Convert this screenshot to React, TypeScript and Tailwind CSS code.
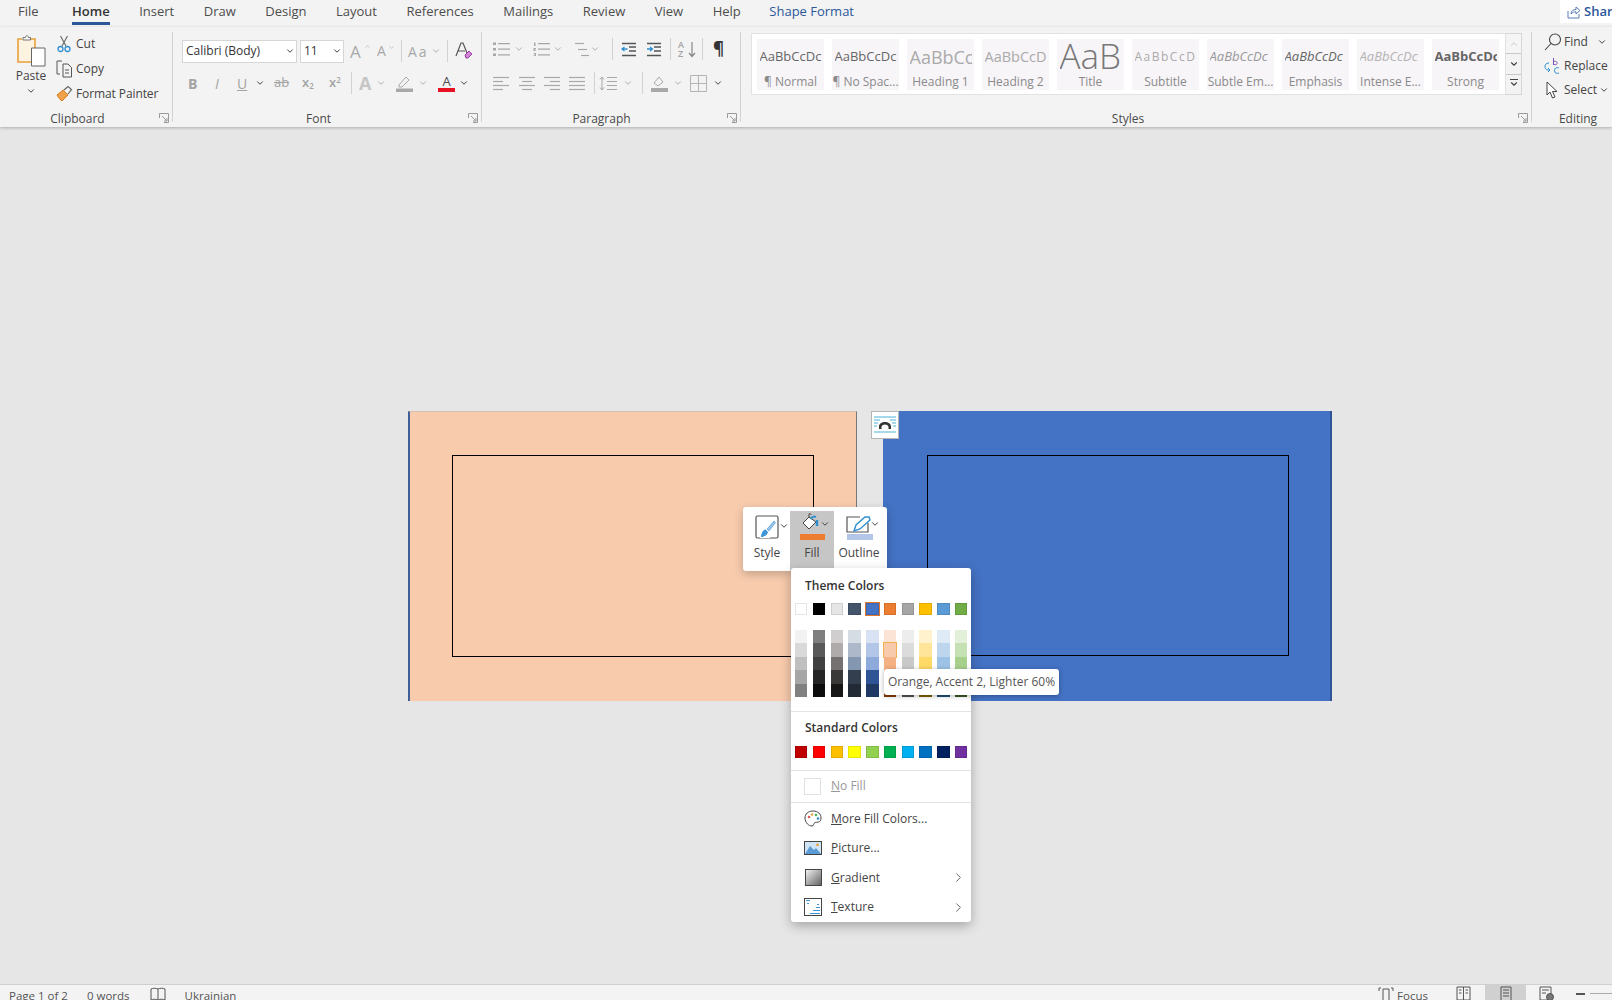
import React from 'react';
import { ChevronDown, ChevronRight, ChevronUp } from 'lucide-react';

const tabs = ['Home', 'Insert', 'Draw', 'Design', 'Layout', 'References', 'Mailings', 'Review', 'View', 'Help'];

const themeTop = ['#ffffff', '#000000', '#e7e6e6', '#44546a', '#4472c4', '#ed7d31', '#a5a5a5', '#ffc000', '#5b9bd5', '#70ad47'];
const themeShades = [
  ['#f2f2f2', '#d9d9d9', '#bfbfbf', '#a6a6a6', '#808080'],
  ['#7f7f7f', '#595959', '#404040', '#262626', '#0d0d0d'],
  ['#d0cece', '#afabab', '#767171', '#3b3838', '#181717'],
  ['#d6dce4', '#adb9ca', '#8497b0', '#333f4f', '#222b35'],
  ['#d9e2f3', '#b4c6e7', '#8eaadb', '#2f5496', '#1f3864'],
  ['#fbe4d5', '#f7caac', '#f4b183', '#c55a11', '#833c0b'],
  ['#ededed', '#dbdbdb', '#c9c9c9', '#7b7b7b', '#525252'],
  ['#fff2cc', '#ffe599', '#ffd966', '#bf9000', '#7f6000'],
  ['#deeaf6', '#bdd6ee', '#9cc2e5', '#2e74b5', '#1f4e79'],
  ['#e2efd9', '#c5e0b3', '#a8d08d', '#538135', '#385623'],
];
const standard = ['#c00000', '#ff0000', '#ffc000', '#ffff00', '#92d050', '#00b050', '#00b0f0', '#0070c0', '#002060', '#7030a0'];

const Chev: React.FC<{ dark?: boolean; className?: string }> = ({ dark, className = '' }) => (
  <ChevronDown size={10} strokeWidth={2.4} className={`${dark ? 'text-[#444]' : 'text-[#b0b0b0]'} shrink-0 ${className}`} />
);

const Launcher = () => (
  <svg width="10" height="10" viewBox="0 0 10 10" className="absolute right-[3px] -bottom-[1px] text-[#9a9a9a]" fill="none" stroke="currentColor">
    <path d="M0.5 5V0.5H9.5V9.5H5M3 3L8 8M8 5V8H5" />
  </svg>
);

const Lines: React.FC<{ rows: [number, number][]; color?: string }> = ({ rows, color = '#a8a8a8' }) => (
  <svg width="17" height="15" viewBox="0 0 17 15" fill="none" stroke={color} strokeWidth="1.2">
    {rows.map(([a, b], i) => (
      <path key={i} d={`M${a} ${1.5 + i * (12 / (rows.length - 1))}H${b}`} />
    ))}
  </svg>
);

const Indent: React.FC<{ flip?: boolean }> = ({ flip }) => (
  <svg width="16" height="15" viewBox="0 0 16 15" fill="none">
    <path d="M1 1.5H15M8 5H15M8 9H15M1 13.5H15" stroke="#555" strokeWidth="1.3" />
    <path d={flip ? 'M1 7H6M4 5L6.5 7L4 9' : 'M6.5 7H1.5M3.5 5L1 7L3.5 9'} stroke="#2f8fd0" strokeWidth="1.3" />
  </svg>
);

const Group: React.FC<{ label: string; className: string; labelClass: string; children: React.ReactNode }> = ({ label, className, labelClass, children }) => (
  <div className={`relative shrink-0 flex flex-col border-r border-[#d2d2d2] my-[5px] ${className}`}>
    <div className="flex-1 min-h-0 -mt-[5px]">{children}</div>
    <div className={`h-[16px] leading-[16px] text-[12px] text-[#4a4a4a] text-center -mb-[5px] ${labelClass}`}>{label}</div>
    <Launcher />
  </div>
);

const StyleItem: React.FC<{ sample: string; label: string; className: string }> = ({ sample, label, className }) => (
  <div className="w-[67px] h-[51px] shrink-0 bg-[#f7f5f8] flex flex-col items-center overflow-hidden pt-[2px]">
    <div className={`h-[33px] w-[62px] shrink-0 overflow-hidden whitespace-nowrap flex items-center ${className}`}>{sample}</div>
    <div className="text-[12px] leading-[16px] text-[#8a8a8a] whitespace-nowrap">{label}</div>
  </div>
);

const MenuRow: React.FC<{ icon: React.ReactNode; children: React.ReactNode; arrow?: boolean }> = ({ icon, children, arrow }) => (
  <div className="h-[29.5px] flex items-center pl-[13px] pr-[5px] text-[12px] text-[#444]">
    <span className="w-[18px] h-[18px] shrink-0 flex items-center justify-center">{icon}</span>
    <span className="ml-[9px] flex-1">{children}</span>
    {arrow && <ChevronRight size={15} strokeWidth={1.4} className="text-[#555]" />}
  </div>
);

const Swatch: React.FC<{ color: string }> = ({ color }) => (
  <span className="w-[12.4px] h-[12px] shrink-0 border border-black/10" style={{ backgroundColor: color }} />
);

export default function App() {
  return (
    <div className="w-[1612px] h-[1000px] overflow-hidden flex flex-col bg-[#e6e6e6] text-[#444] font-['Open_Sans',sans-serif]">
      {/* Tab strip */}
      <div className="h-[27px] shrink-0 bg-[#f3f3f3] flex items-start pl-[18px] gap-[29.5px] relative text-[13px] leading-[23px]">
        <div className="text-[#4d4d4d] mr-[4px]">File</div>
        {tabs.map(t => (
          <div key={t} className={t === 'Home' ? 'relative text-[#333] font-semibold' : 'text-[#4d4d4d]'}>
            {t}
            {t === 'Home' && <span className="absolute left-0 right-0 top-[22px] h-[2.5px] bg-[#2b579a]" />}
          </div>
        ))}
        <div className="text-[#2b579a] -ml-[1px]">Shape Format</div>
        <div className="absolute right-0 top-0 w-[52px] h-[23px] bg-white flex items-center pl-[7px] gap-[3px] overflow-hidden text-[#2b579a] font-semibold whitespace-nowrap">
          <svg width="14" height="14" viewBox="0 0 14 14" fill="none" stroke="#5a7fb5" className="shrink-0">
            <path d="M1 6V13H12V9M4 9C4 6 6 4.5 9 4.5V2L13 5.5L9 9V6.8C7 6.8 5.5 7.5 4 9Z" />
          </svg>
          Share
        </div>
      </div>

      {/* Ribbon */}
      <div className="h-[100px] shrink-0 bg-[#f3f3f3] flex shadow-[0_1px_3px_rgba(0,0,0,0.25)] relative z-10 text-[12px]">
        {/* Clipboard */}
        <Group label="Clipboard" className="w-[173px]" labelClass="pr-[17px]">
          <div className="flex h-full">
            <div className="w-[56px] shrink-0 flex flex-col items-center pt-[7px] pl-[6px]">
              <svg width="29" height="33" viewBox="0 0 29 33" fill="none">
                <path d="M1 5H18V14H14V28H1Z" fill="#fdf3e1" />
                <path d="M5 5H1V28H14M14 5H18V14" stroke="#e9a13b" strokeWidth="1.6" />
                <path d="M6 6V3.5H8.5C8.8 1 11 1 11.5 3.5H13.5V6Z" stroke="#777" fill="#f8f8f8" />
                <path d="M14.5 14H28V32H14.5Z" stroke="#666" fill="#ffffff" />
              </svg>
              <div className="leading-[16px] mt-[1px]">Paste</div>
              <Chev dark className="mt-[2px]" />
            </div>
            <div className="flex flex-col pt-[4px]">
              <div className="h-[25px] flex items-center">
                <svg width="16" height="18" viewBox="0 0 16 18" fill="none" className="mr-[4px]">
                  <path d="M4.5 1L10 11M11.5 1L6 11" stroke="#666" strokeWidth="1.1" />
                  <circle cx="4.5" cy="14" r="2.5" stroke="#2f8fd0" strokeWidth="1.3" />
                  <circle cx="11.5" cy="14" r="2.5" stroke="#2f8fd0" strokeWidth="1.3" />
                </svg>
                Cut
              </div>
              <div className="h-[25px] flex items-center">
                <svg width="16" height="18" viewBox="0 0 16 18" fill="none" stroke="#555" className="mr-[4px]">
                  <path d="M6 1H1V14H4M7 4H12L15.5 7.5V17H7Z" />
                  <path d="M9 10H13M9 13H13" />
                </svg>
                Copy
              </div>
              <div className="h-[25px] flex items-center whitespace-nowrap">
                <svg width="17" height="17" viewBox="0 0 17 17" fill="none" className="mr-[3px]">
                  <path d="M1 10L7 5L12 10L6 16Q3 14 1 10Z" fill="#f0a24a" stroke="#d57f20" />
                  <path d="M8 5L12 1.5L15.5 4.5L12 9" stroke="#666" strokeWidth="1.2" />
                </svg>
                <span className="tracking-[-0.1px]">Format Painter</span>
              </div>
            </div>
          </div>
        </Group>

        {/* Font */}
        <Group label="Font" className="w-[309px] pl-[9px]" labelClass="pr-[26px]">
          <div className="flex items-center pt-[12px] h-[36px]">
            <div className="w-[115px] h-[23px] bg-white border border-[#d6d6d6] flex items-center justify-between pl-[3px] pr-[1px] text-[#333]">
              Calibri (Body) <Chev dark />
            </div>
            <div className="w-[44px] h-[23px] ml-[3px] bg-white border border-[#d6d6d6] flex items-center justify-between pl-[3px] pr-[1px] text-[#333]">
              11 <Chev dark />
            </div>
            <span className="ml-[6px] w-[18px] text-[17px] leading-none text-[#a8a8a8] relative">A<ChevronUp size={7} className="absolute right-[-3px] top-0" /></span>
            <span className="ml-[9px] w-[14px] text-[14px] leading-none text-[#a8a8a8] relative">A<ChevronDown size={7} className="absolute right-[-4px] top-0" /></span>
            <span className="ml-[10px] h-[22px] border-l border-[#d2d2d2]" />
            <span className="ml-[6px] text-[14px] text-[#a8a8a8] tracking-[2px]">Aa</span>
            <Chev className="ml-[2px]" />
            <span className="ml-[6px] h-[22px] border-l border-[#d2d2d2]" />
            <svg width="18" height="18" viewBox="0 0 18 18" fill="none" className="ml-[7px]">
              <path d="M1 14L6 1H8L12 11M3 9H10" stroke="#555" strokeWidth="1.2" />
              <path d="M10 13L14 9L17 12L13 16H11Z" fill="#d184d6" stroke="#9b3fa5" />
            </svg>
          </div>
          <div className="flex items-center h-[30px] mt-[5px] text-[#a4a4a4] text-[14px]">
            <span className="ml-[6px] w-[10px] font-bold">B</span>
            <span className="ml-[17px] w-[10px] italic">I</span>
            <span className="ml-[12px] w-[11px] underline">U</span>
            <Chev dark className="ml-[7px]" />
            <span className="ml-[9px] w-[17px] line-through text-[13px]">ab</span>
            <span className="ml-[11px] w-[13px] text-[13px] font-semibold">x<sub className="text-[8px]">2</sub></span>
            <span className="ml-[14px] w-[13px] text-[13px] font-semibold">x<sup className="text-[8px]">2</sup></span>
            <span className="ml-[9px] h-[22px] border-l border-[#d2d2d2]" />
            <span className="ml-[7px] w-[15px] text-[18px] leading-none font-bold text-[#c6c6c6]">A</span>
            <Chev className="ml-[2px]" />
            <svg width="17" height="17" viewBox="0 0 17 17" fill="none" className="ml-[10px]">
              <path d="M3 10L10 2L13 5L6 12H3Z" stroke="#a8a8a8" />
              <path d="M0 13.5H17V17H0Z" fill="#a8a8a8" />
            </svg>
            <Chev className="ml-[5px]" />
            <div className="ml-[10px] w-[17px] flex flex-col items-center text-[#4d4d4d] text-[13px] leading-[14px]">
              A
              <span className="w-[17px] h-[4px] bg-[#e81123]" />
            </div>
            <Chev dark className="ml-[4px]" />
          </div>
        </Group>

        {/* Paragraph */}
        <Group label="Paragraph" className="w-[259px] pl-[11px]" labelClass="pr-[30px]">
          <div className="flex items-center pt-[10px] h-[34px]">
            <svg width="17" height="15" viewBox="0 0 17 15" fill="#a8a8a8">
              <path d="M0 0.5H3V3H0ZM0 6H3V8.5H0ZM0 11.5H3V14H0ZM5 1H17V2.2H5ZM5 6.6H17V7.8H5ZM5 12.2H17V13.4H5Z" />
            </svg>
            <Chev className="ml-[4px]" />
            <svg width="17" height="15" viewBox="0 0 17 15" fill="#a8a8a8" className="ml-[9px]">
              <path d="M1 0.5H2.5V4H1ZM0.5 6H3V6.8L1.5 8.2H3V9H0.5ZM0.5 11H3V14H0.5V13.2H2V12.8H1V12.2H2V11.8H0.5ZM5 1H17V2.2H5ZM5 6.6H17V7.8H5ZM5 12.2H17V13.4H5Z" />
            </svg>
            <Chev className="ml-[3px]" />
            <span className="ml-[9px]"><Lines rows={[[3, 12], [6, 15], [9, 17]]} /></span>
            <Chev className="ml-[1px]" />
            <span className="ml-[12px] h-[22px] border-l border-[#d2d2d2]" />
            <span className="ml-[8px]"><Indent /></span>
            <span className="ml-[9px]"><Indent flip /></span>
            <span className="ml-[8px] h-[22px] border-l border-[#d2d2d2]" />
            <span className="ml-[7px] w-[8px] text-[9px] leading-[9px] font-semibold text-[#a4a4a4]">A<br />Z</span>
            <svg width="10" height="17" viewBox="0 0 10 17" fill="none" className="ml-[1px]">
              <path d="M5 1V15M2 12L5 15.5L8 12" stroke="#888" strokeWidth="1.2" />
            </svg>
            <span className="ml-[5px] h-[22px] border-l border-[#d2d2d2]" />
            <span className="ml-[10px] text-[17px] font-bold text-[#333]">¶</span>
          </div>
          <div className="flex items-center h-[30px] mt-[7px]">
            <Lines rows={[[0, 16], [0, 10], [0, 16], [0, 10]]} />
            <span className="ml-[9px]"><Lines rows={[[0, 16], [3, 13], [0, 16], [3, 13]]} /></span>
            <span className="ml-[8px]"><Lines rows={[[0, 16], [6, 16], [0, 16], [6, 16]]} /></span>
            <span className="ml-[8px]"><Lines rows={[[0, 16], [0, 16], [0, 16], [0, 16]]} /></span>
            <span className="ml-[8px] h-[22px] border-l border-[#d2d2d2]" />
            <svg width="18" height="15" viewBox="0 0 18 15" fill="none" stroke="#a8a8a8" className="ml-[4px]">
              <path d="M3 1V14M1 3.5L3 1L5 3.5M1 11.5L3 14L5 11.5M8 1.5H18M8 5.5H18M8 9.5H18M8 13.5H18" />
            </svg>
            <Chev className="ml-[6px]" />
            <span className="ml-[9px] h-[22px] border-l border-[#d2d2d2]" />
            <svg width="17" height="17" viewBox="0 0 17 17" fill="none" className="ml-[8px]">
              <path d="M3 8L8 2L12 7L7 11Z" stroke="#a8a8a8" />
              <path d="M0 13H17V17H0Z" fill="#a8a8a8" />
            </svg>
            <Chev className="ml-[5px]" />
            <svg width="17" height="17" viewBox="0 0 17 17" fill="none" stroke="#b4b4b4" className="ml-[7px]">
              <path d="M0.5 0.5H16.5V16.5H0.5ZM8.5 0.5V16.5M0.5 8.5H16.5" />
            </svg>
            <Chev dark className="ml-[6px]" />
          </div>
        </Group>

        {/* Styles */}
        <Group label="Styles" className="w-[791px] pl-[10px]" labelClass="pr-[26px]">
          <div className="flex pt-[6px]">
            <div className="w-[755px] h-[62px] bg-white border border-[#e2e2e2] flex items-center pl-[5px] gap-[8px] overflow-hidden">
              <StyleItem sample="AaBbCcDc" label="¶ Normal" className="text-[13px] text-[#666]" />
              <StyleItem sample="AaBbCcDc" label="¶ No Spac..." className="text-[13px] text-[#666]" />
              <StyleItem sample="AaBbCc" label="Heading 1" className="text-[18px] text-[#aaa]" />
              <StyleItem sample="AaBbCcD" label="Heading 2" className="text-[14.5px] text-[#aaa]" />
              <StyleItem sample="AaB" label="Title" className="text-[35px] leading-[33px] font-light text-[#777] pb-[4px]" />
              <StyleItem sample="AaBbCcD" label="Subtitle" className="text-[12px] tracking-[1.5px] text-[#aaa]" />
              <StyleItem sample="AaBbCcDc" label="Subtle Em..." className="text-[13px] italic text-[#999]" />
              <StyleItem sample="AaBbCcDc" label="Emphasis" className="text-[13px] italic text-[#666]" />
              <StyleItem sample="AaBbCcDc" label="Intense E..." className="text-[13px] italic text-[#b4b4b4]" />
              <StyleItem sample="AaBbCcDc" label="Strong" className="text-[13px] font-bold text-[#666]" />
            </div>
            <div className="w-[16px] h-[62px] flex flex-col border border-l-0 border-[#d6d6d6] divide-y divide-[#c8c8c8]">
              <div className="flex-1 flex items-center justify-center bg-[#f5f5f5]"><ChevronUp size={10} className="text-[#c0c0c0]" /></div>
              <div className="flex-1 flex items-center justify-center"><ChevronDown size={10} strokeWidth={2.6} className="text-[#444]" /></div>
              <div className="flex-1 flex flex-col items-center justify-center">
                <span className="w-[8px] border-t border-[#444]" />
                <ChevronDown size={10} strokeWidth={2.6} className="text-[#444] -mt-[1px]" />
              </div>
            </div>
          </div>
        </Group>

        {/* Editing */}
        <div className="flex-1 relative flex flex-col my-[5px]">
          <div className="flex-1 -mt-[5px] pt-[3px] pl-[12px]">
            <div className="h-[24px] flex items-center">
              <svg width="18" height="18" viewBox="0 0 18 18" fill="none" stroke="#444" strokeWidth="1.1" className="mr-[2px]">
                <circle cx="11" cy="6.5" r="5.5" /><path d="M7 10.5L1 17" />
              </svg>
              Find <Chev dark className="ml-[9px]" />
            </div>
            <div className="h-[24px] flex items-center">
              <svg width="18" height="18" viewBox="0 0 18 18" fill="none" className="mr-[2px]">
                <path d="M9.5 1V8M9.5 5C11 3.5 13.5 4.5 13 6.5C12.5 8.5 10 8 9.5 6.5" stroke="#7d4fb0" />
                <path d="M5 6C2 6 0.5 8 1 10.5C1.5 12.5 3.5 13.5 6 13M4 11L6 13L4 15" stroke="#2f8fd0" />
                <path d="M15 11C12.5 10 10.5 11 10.5 13.5C10.5 16 12.5 17 15 16" stroke="#2f8fd0" />
              </svg>
              Replace
            </div>
            <div className="h-[24px] flex items-center">
              <svg width="18" height="18" viewBox="0 0 18 18" fill="#fff" stroke="#444" className="mr-[2px]">
                <path d="M3 1V14L6 11L8.5 17L11 16L8.5 10.5H13Z" />
              </svg>
              Select <Chev dark className="ml-[2px]" />
            </div>
          </div>
          <div className="h-[16px] leading-[16px] text-[12px] text-[#4a4a4a] text-center -mb-[5px] pl-[12px]">Editing</div>
        </div>
      </div>

      {/* Document canvas */}
      <div className="flex-1 relative overflow-hidden">
        <div className="absolute left-[408px] top-[284px] w-[449px] h-[290px] bg-[#f8cbad] border-l-2 border-l-[#3f5f96] border-r border-r-[#777] border-t border-t-[#d8c0b0]">
          <div className="absolute left-[42px] top-[43px] w-[362px] h-[202px] border border-black" />
        </div>
        <div className="absolute left-[883px] top-[284px] w-[449px] h-[290px] bg-[#4472c4] border-r-2 border-r-[#2f5496]">
          <div className="absolute left-[44px] top-[44px] w-[362px] h-[201px] border border-black" />
        </div>

        {/* Layout options */}
        <div className="absolute left-[871px] top-[284px] w-[28px] h-[28px] bg-white border border-[#b5b5b5] flex items-center justify-center">
          <svg width="22" height="20" viewBox="0 0 22 20" fill="none">
            <path d="M0 2H22M0 5H6M16 5H22M0 8H4M18 8H22M0 11H3M19 11H22M0 17H22" stroke="#4db2d8" />
            <path d="M5 14V11.5C5 5.5 17 5.5 17 11.5V14H14.5V12C14.5 8.5 7.5 8.5 7.5 12V14Z" fill="#333" />
          </svg>
        </div>

        {/* Mini toolbar */}
        <div className="absolute left-[743px] top-[380px] w-[144px] h-[64px] bg-white rounded-[3px] shadow-[0_3px_10px_rgba(0,0,0,0.22)] flex text-[12px] text-[#444]">
          <div className="w-[47px] flex flex-col items-center pt-[8px] pl-[3px]">
            <div className="flex items-center h-[24px] pl-[8px]">
              <svg width="24" height="24" viewBox="0 0 24 24" fill="none">
                <rect x="1" y="1" width="22" height="22" rx="1.5" stroke="#555" strokeWidth="1.2" />
                <path d="M5 23H15V19L22 12V5H18L11 13C8 14 6 18 5 23Z" fill="#fff" />
                <path d="M6 22C6 18 8 15 10.5 14.5L13 17C12.5 20 9 22 6 22Z" fill="#3b95d6" />
                <path d="M12 14L19 6L20.5 7.5L14 16Z" fill="#9cc2e5" stroke="#3b95d6" strokeWidth="0.6" />
              </svg>
              <Chev dark className="-mt-[2px]" />
            </div>
            <div className="leading-[16px] mt-[6px] -ml-[2px]">Style</div>
          </div>
          <div className="w-[44px] h-[60px] mt-[4px] bg-[#c6c6c6] flex flex-col items-center pt-[2px]">
            <div className="flex items-start h-[21px] pl-[7px]">
              <svg width="20" height="20" viewBox="0 0 20 20" fill="none">
                <path d="M8 4L2 10L8 16L15 9Z" fill="#fff" stroke="#444" />
                <path d="M8 4V1M8 1C9 0 10 1 10 2" stroke="#444" />
                <path d="M15 4C13 3 11 4 9.5 6" stroke="#2f8fd0" strokeWidth="2" />
                <path d="M16 7V13" stroke="#2f8fd0" strokeWidth="2.4" />
              </svg>
              <Chev dark className="mt-[6px] ml-[-1px]" />
            </div>
            <span className="w-[25px] h-[6px] bg-[#ed7d31]" />
            <div className="leading-[16px] mt-[5px]">Fill</div>
          </div>
          <div className="w-[53px] flex flex-col items-center pt-[8px]">
            <div className="flex items-center h-[18px] pl-[4px]">
              <svg width="26" height="17" viewBox="0 0 26 17" fill="none">
                <path d="M14 1H1V16H22V7" stroke="#555" strokeWidth="1.2" />
                <path d="M8 15L10 9L19 1H23L24 4L14 13Z" fill="#fff" stroke="#2f8fd0" strokeWidth="1.4" />
              </svg>
              <Chev dark className="ml-[-2px]" />
            </div>
            <span className="w-[26px] h-[6px] bg-[#b4c6e7] -ml-[2px] mt-[1px]" />
            <div className="leading-[16px] mt-[5px] -ml-[3px]">Outline</div>
          </div>
        </div>

        {/* Fill dropdown */}
        <div className="absolute left-[791px] top-[441px] w-[180px] h-[354px] bg-white rounded-[3px] shadow-[0_4px_12px_rgba(0,0,0,0.28)] pt-[10px] text-[12px] z-10">
          <div className="pl-[14px] leading-[16px] font-semibold text-[#333]">Theme Colors</div>
          <div className="flex pl-[4px] gap-[5.4px] mt-[9px]">
            {themeTop.map(c => (
              <span key={c} className="relative w-[12.4px] h-[12px] shrink-0 border border-black/10" style={{ backgroundColor: c }}>
                {c === '#4472c4' && <span className="absolute -inset-[2px] border border-[#e5762c]" />}
              </span>
            ))}
          </div>
          <div className="flex pl-[4px] gap-[5.4px] mt-[15px]">
            {themeShades.map((col, i) => (
              <div key={i} className="w-[12.4px] flex flex-col shrink-0">
                {col.map((c, j) => (
                  <span key={c} className="relative h-[13.4px]" style={{ backgroundColor: c }}>
                    {i === 5 && j === 1 && <span className="absolute -inset-[1px] border border-[#f0b050]" />}
                  </span>
                ))}
              </div>
            ))}
          </div>
          <div className="mt-[14px] border-t border-[#e3e3e3]" />
          <div className="mt-[8px] pl-[14px] leading-[16px] font-semibold text-[#333]">Standard Colors</div>
          <div className="flex pl-[4px] gap-[5.4px] mt-[10px]">
            {standard.map(c => <Swatch key={c} color={c} />)}
          </div>
          <div className="mt-[12px] border-t border-[#e3e3e3]" />
          <div className="h-[31px] flex items-center pl-[13px] text-[#999]">
            <span className="w-[17px] h-[17px] border border-[#e0e0e0]" />
            <span className="ml-[10px]"><span className="underline">N</span>o Fill</span>
          </div>
          <div className="border-t border-[#e3e3e3]" />
          <div className="mt-[1px]">
            <MenuRow icon={
              <svg width="18" height="17" viewBox="0 0 18 17" fill="none">
                <path d="M9 1C4 1 1 4 1 8C1 13 5 16 8 16C10 16 9.5 13 11 12.5C13 12 17 13 17 8C17 4 14 1 9 1Z" stroke="#444" />
                <circle cx="5" cy="7" r="1.3" fill="#e05a4e" /><circle cx="8" cy="4.5" r="1.3" fill="#e9a13b" />
                <circle cx="12" cy="5" r="1.3" fill="#4caf50" /><circle cx="14" cy="8.5" r="1.3" fill="#2f8fd0" />
              </svg>
            }><span className="underline">M</span>ore Fill Colors...</MenuRow>
            <MenuRow icon={
              <svg width="18" height="14" viewBox="0 0 18 14">
                <rect x="0.5" y="0.5" width="17" height="13" fill="#cfe4f5" stroke="#444" />
                <path d="M1 13L6 5L10 9L12 7L17 13Z" fill="#5b9bd5" />
                <circle cx="13.5" cy="3.8" r="1.4" fill="#e9a13b" />
              </svg>
            }><span className="underline">P</span>icture...</MenuRow>
            <MenuRow arrow icon={<span className="w-[17px] h-[17px] border border-[#444] bg-gradient-to-br from-[#f2f2f2] to-[#666]" />}>
              <span className="underline">G</span>radient
            </MenuRow>
            <MenuRow arrow icon={
              <svg width="18" height="18" viewBox="0 0 18 18">
                <rect x="0.5" y="0.5" width="17" height="17" fill="#fff" stroke="#444" />
                <path d="M2 2H6V3H2ZM3 5H5V6H3ZM12 9H16V10H12ZM9 12H16V13H9ZM6 15H16V16H6ZM13 6H15V7H13Z" fill="#3b95d6" />
              </svg>
            }><span className="underline">T</span>exture</MenuRow>
          </div>
        </div>

        {/* Tooltip */}
        <div className="absolute left-[884px] top-[542px] w-[175px] h-[26px] bg-white rounded-[3px] shadow-[0_1px_5px_rgba(0,0,0,0.3)] flex items-center justify-center whitespace-nowrap text-[12px] text-[#555] z-20">
          Orange, Accent 2, Lighter 60%
        </div>
      </div>

      {/* Status bar */}
      <div className="h-[16px] shrink-0 bg-[#f3f3f3] border-t border-[#cfcfcf] flex items-start text-[11.5px] text-[#555] leading-[16px] overflow-hidden pl-[9px] relative">
        <span className="mt-[3px]">Page 1 of 2</span>
        <span className="mt-[3px] ml-[19px]">0 words</span>
        <svg width="16" height="15" viewBox="0 0 16 15" fill="none" stroke="#555" className="ml-[20px] mt-[2px]">
          <path d="M8 2C6 1 3 1 1 2V13C3 12 6 12 8 13C10 12 13 12 15 13V2C13 1 10 1 8 2ZM8 2V13" />
        </svg>
        <span className="mt-[3px] ml-[19px]">Ukrainian</span>
        <div className="ml-auto flex items-start h-full">
          <svg width="16" height="15" viewBox="0 0 16 15" fill="none" stroke="#555" className="mt-[2px]">
            <path d="M1 4V1H3M13 1H15V4M5 2H11V14H5Z" />
          </svg>
          <span className="mt-[3px] ml-[3px]">Focus</span>
          <svg width="15" height="15" viewBox="0 0 15 15" fill="none" stroke="#555" className="ml-[28px] mt-[1px]">
            <path d="M1 1H14V14H1ZM7.5 1V14M3 4H5.5M3 7H5.5M9.5 4H12M9.5 7H12" />
          </svg>
          <div className="ml-[14px] w-[41px] h-full bg-[#d0d0d0] flex justify-center pt-[1px]">
            <svg width="12" height="15" viewBox="0 0 12 15" fill="none" stroke="#555">
              <path d="M1 1H11V15H1ZM3 4H9M3 7H9M3 10H9" />
            </svg>
          </div>
          <svg width="15" height="15" viewBox="0 0 15 15" fill="none" stroke="#555" className="ml-[13px] mt-[1px]">
            <path d="M1 1H12V14H1ZM3 4H10M3 7H7" />
            <circle cx="11" cy="11" r="3.5" fill="#777" />
          </svg>
          <span className="ml-[22px] mt-[8px] w-[9px] h-[1.5px] bg-[#555]" />
          <span className="ml-[5px] mt-[8px] w-[22px] h-[1px] bg-[#aaa]" />
        </div>
      </div>
    </div>
  );
}
